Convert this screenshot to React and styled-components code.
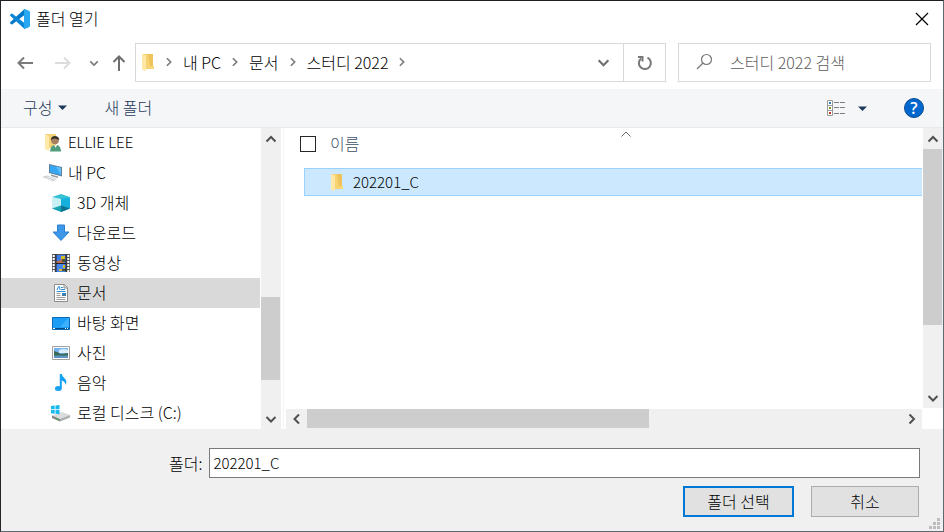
import React, { useState } from 'react';
import styled, { createGlobalStyle, css } from 'styled-components';

const GlobalStyle = createGlobalStyle`
  *, *::before, *::after {
    box-sizing: border-box;
  }

  body {
    margin: 0;
    background: #fff;
    color: #000;
    font: 300 16px/20px 'Noto Sans CJK KR', sans-serif;
  }

  button, input {
    margin: 0;
    color: inherit;
    font: inherit;
  }

  svg {
    display: block;
    flex: none;
  }
`;

const latin = css`
  font-size: 15px;
`;

const Dialog = styled.main`
  display: flex;
  flex-direction: column;
  min-height: 100vh;
  background: #fff;
  border: 1px solid #5f686c;
  border-top-color: #1f2026;
  border-left-color: #26262a;
`;

const TitleBar = styled.header`
  display: flex;
  align-items: center;
  height: 36px;
  padding: 0 11px 0 8px;
`;

const Title = styled.h1`
  flex: 1;
  margin: 0;
  padding: 0 0 2px 5px;
  font-size: 16px;
  font-weight: 300;
`;

const IconButton = styled.button`
  display: flex;
  align-items: center;
  justify-content: center;
  width: ${(p) => p.$width || 20}px;
  height: 36px;
  padding: 0;
  border: 0;
  background: none;
`;

const NavBar = styled.div`
  display: flex;
  align-items: center;
  gap: 12px;
  padding: 6px 12px 7px 14px;
`;

const NavButtons = styled.div`
  display: flex;
  align-items: center;
  gap: 14px;
  width: 108px;
`;

const HistoryButtons = styled.div`
  display: flex;
  align-items: center;
`;

const AddressBar = styled.div`
  display: flex;
  flex: 1;
  height: 39px;
  border: 1px solid #d9d9d9;
`;

const Crumbs = styled.nav`
  display: flex;
  flex: 1;
  align-items: center;
  padding: 0 0 2px 5px;
`;

const Crumb = styled.button`
  padding: 0;
  border: 0;
  background: none;
`;

const CrumbArrow = styled.span`
  display: flex;
  justify-content: center;
  width: 28px;
`;

const RefreshButton = styled(IconButton)`
  width: 42px;
  height: auto;
  border-left: 1px solid #d9d9d9;
`;

const SearchBox = styled.label`
  display: flex;
  align-items: center;
  gap: 17px;
  width: 253px;
  height: 39px;
  padding: 0 0 2px 17px;
  border: 1px solid #d9d9d9;
`;

const SearchInput = styled.input`
  flex: 1;
  min-width: 0;
  padding: 0;
  border: 0;
  outline: 0;
  background: none;

  &::placeholder {
    color: #5d5d5d;
    opacity: 1;
  }
`;

const Toolbar = styled.div`
  display: flex;
  align-items: center;
  height: 39px;
  padding: 0 19px 0 22px;
  background: #f5f6f7;
  border-bottom: 1px solid #e8e9eb;
`;

const ToolButton = styled.button`
  display: flex;
  align-items: center;
  gap: 6px;
  margin-right: 37px;
  padding: 0 0 2px;
  border: 0;
  background: none;
  color: #1e395b;
`;

const ToolbarEnd = styled.div`
  display: flex;
  align-items: center;
  gap: 12px;
  margin-left: auto;
`;

const HelpButton = styled.button`
  width: 20px;
  height: 20px;
  margin-left: 25px;
  padding: 0;
  border: 1px solid #0b4a8c;
  border-radius: 50%;
  background: #0067cf;
  color: #fff;
  font: 600 16px/18px 'Open Sans', sans-serif;
`;

const Panes = styled.div`
  display: flex;
  flex: 1;
`;

const Tree = styled.ul`
  width: 260px;
  margin: 0;
  padding: 0 1px 1px 0;
  list-style: none;
`;

const TreeItem = styled.li`
  display: flex;
  align-items: center;
  gap: 6px;
  height: 30px;
  padding-left: ${(p) => (p.$depth ? 50 : 41)}px;
  background: ${(p) => (p.$selected ? '#d9d9d9' : 'transparent')};
  ${(p) => p.$latin && latin}
`;

const TreeLabel = styled.span`
  padding-bottom: 2px;
`;

const ScrollBar = styled.div`
  display: flex;
  flex-direction: ${(p) => (p.$horizontal ? 'row' : 'column')};
  ${(p) => (p.$horizontal ? 'height: 20px;' : 'width: 20px;')}
  background: #f0f0f0;
`;

const ScrollArrow = styled.button`
  display: flex;
  align-items: center;
  justify-content: center;
  width: ${(p) => (p.$horizontal ? 21 : 19)}px;
  height: ${(p) => (p.$horizontal ? 19 : 21)}px;
  padding: 0;
  border: 0;
  background: none;
`;

const Track = styled.div`
  display: flex;
  flex: 1;
  flex-direction: ${(p) => (p.$horizontal ? 'row' : 'column')};
`;

const Spacer = styled.div`
  flex: ${(p) => p.$grow};
`;

const Thumb = styled.div`
  flex: ${(p) => p.$grow};
  background: #cdcdcd;
  ${(p) => (p.$horizontal ? 'height: 19px;' : 'width: 19px;')}
`;

const Splitter = styled.div`
  width: 3px;
  border-right: 1px solid #f4f4f4;
`;

const FilePane = styled.section`
  display: grid;
  flex: 1;
  grid-template-columns: 1fr 20px;
  grid-template-rows: 1fr 20px;
  gap: 1px;
  padding-left: 2px;
`;

const FileTable = styled.div`
  padding-left: 14px;
`;

const ColumnHeader = styled.div`
  display: grid;
  grid-template-columns: 16px 1fr;
  align-items: center;
  column-gap: 14px;
  height: 32px;
  margin-bottom: 8px;
  color: #3a5068;
`;

const NameHeader = styled.div`
  display: grid;
  grid-template-columns: 1fr 1fr 1fr;
  align-items: center;
  height: 100%;
  padding-bottom: 2px;

  svg {
    align-self: start;
    justify-self: center;
  }
`;

const CheckBox = styled.input`
  width: 16px;
  height: 16px;
  appearance: none;
  border: 1px solid #262626;
  background: #fff;
`;

const FileRow = styled.div`
  ${latin}
  display: flex;
  align-items: center;
  gap: 9px;
  height: 28px;
  margin-left: 4px;
  padding-left: 25px;
  border: 1px solid #99d1ff;
  border-right: 0;
  background: #cce8ff;
`;

const Footer = styled.footer`
  position: relative;
  padding: 19px 23px 14px;
  background: #f0f0f0;
`;

const FolderField = styled.div`
  display: flex;
  align-items: center;
  gap: 7px;
  padding-left: 145px;
`;

const FolderInput = styled.input`
  ${latin}
  flex: 1;
  height: 30px;
  padding: 0 3px 2px;
  border: 1px solid #7a7a7a;
  outline: 0;
  background: #fff;
`;

const Actions = styled.div`
  display: flex;
  justify-content: flex-end;
  gap: 17px;
  padding: 8px 1px 0 0;
`;

const ActionButton = styled.button`
  width: ${(p) => (p.$primary ? 111 : 108)}px;
  height: 31px;
  padding: 0 0 2px;
  border: ${(p) => (p.$primary ? '2px solid #0078d7' : '1px solid #adadad')};
  background: #e1e1e1;
`;

const Grip = styled.svg`
  position: absolute;
  right: 3px;
  bottom: 2px;
`;

const chevrons = {
  up: 'M1.500 8.500 L6 4 L10.500 8.500',
  down: 'M1.500 4 L6 8.500 L10.500 4',
  left: 'M8 1.500 L3.500 6 L8 10.500',
  right: 'M3.500 1.500 L8 6 L3.500 10.500',
};

const Chevron = ({ dir, size = 12, color = '#505050', weight = 2 }) => (
  <svg width={size} height={size} viewBox="0 0 12 12" fill="none" stroke={color} strokeWidth={weight} aria-hidden="true">
    <path d={chevrons[dir]} />
  </svg>
);

const Arrow = ({ color, rotate = 0 }) => (
  <svg width="18" height="18" viewBox="0 0 18 18" fill="none" stroke={color} strokeWidth="2" aria-hidden="true">
    <path d="M17 9H2.5M8 3.5 2.5 9 8 14.5" transform={`rotate(${rotate} 9 9)`} />
  </svg>
);

const Caret = () => (
  <svg width="9" height="5" viewBox="0 0 9 5" aria-hidden="true">
    <path d="M0 0.5h9L4.5 5z" fill="#1e395b" />
  </svg>
);

const VsCodeLogo = () => (
  <svg width="22" height="22" viewBox="0 0 22 22" aria-hidden="true">
    <path d="M1.2 14.200 15.500 1v6L3.400 16.200q-.6.400-1.200 0l-1-.9q-.5-.5 0-1.100z" fill="#0078c8" />
    <path d="M1.2 7.800 15.500 21v-6L3.400 5.800q-.6-.4-1.200 0l-1 .9q-.5.500 0 1.100z" fill="#0a86d6" />
    <path d="M15 .8 20 2.800Q21 3.200 21 4.200v13.600q0 1-1 1.400L15 21.200V15.500 6.500z" fill="#29a7f0" />
  </svg>
);

const FolderIcon = () => (
  <svg width="14" height="18" viewBox="0 0 14 18" aria-hidden="true">
    <path d="M2 1h10v12l1 1v2H2z" fill="#f6d273" />
    <path d="M7 1h5v12h-3z" fill="#eec35c" />
    <path d="M1 1l4 1.5v14L4 18l-3-1.5z" fill="#ffe8a6" />
    <path d="M10 13h3v3h-3z" fill="#f9d976" />
  </svg>
);

const treeIcons = {
  user: (
    <>
      <path d="M3 1h11v14H3z" fill="#f3d27a" />
      <path d="M3 1l4 2v15l-4-2z" fill="#ffe9a8" />
      <circle cx="13" cy="7.500" r="3.800" fill="#a9805f" />
      <path d="M9 7.500Q8.500 3.500 12.500 3q4.500 0 4.800 4-2-1-3.800-1.500L10.300 6z" fill="#33302d" />
      <path d="M8 18.500q.5-5.500 4-6.500l1.500 1 2-1q3.500 1.500 3.500 6.500z" fill="#4f9d7d" />
      <path d="M12 12l1.500 3 1.700-3z" fill="#e8e8e8" />
    </>
  ),
  pc: (
    <>
      <path d="M7 1l13 3v9.500L7 10z" fill="#5c7f99" />
      <path d="M8 2.300l11 2.500v7.400L8 9.200z" fill="#35a7f5" />
      <path d="M14 3.600l5 1.200v7.400z" fill="#62c0ff" />
      <path d="M9 11.500l7 2v1.500l-7-2z" fill="#8f999f" />
      <path d="M0 14l5-1.500 10 3.500-4 2.500z" fill="#c5cacd" />
      <path d="M2 14.500l9 3M5 13.500l8.500 3" stroke="#fff" strokeWidth=".7" />
    </>
  ),
  cube: (
    <>
      <path d="M1 4l9-3 9 3-9 3z" fill="#35c2d4" />
      <path d="M1 4l9 2v12.500L1 15.500z" fill="#c9f1f5" />
      <path d="M19 4l-9 2v12.500l9-3z" fill="#16b0dd" />
      <path d="M1 15.500L10 12.500l9 3-9 3.500z" fill="#17a2b5" />
      <path d="M10 12.500v6.500l9-3.500z" fill="#0b7694" />
    </>
  ),
  download: <path d="M6.500 2h7v7h4.500L10 17.500 2 9h4.500z" fill="#3d97e8" stroke="#2a7fd0" />,
  video: (
    <>
      <path d="M1 1h18v18H1z" fill="#55565c" />
      <path d="M5 2h10v8H5z" fill="#3d7be8" />
      <path d="M5 11h10v8H5z" fill="#4686ee" />
      <path d="M5 8h3l2-2 3 2v2H5z" fill="#b9705a" />
      <path d="M10 3h4v3h-4zM12 12h2v3h-2zM8 16h3v2H8z" fill="#d9bc27" />
      <path d="M11 6h3v3h-3zM11 16h4v2h-4z" fill="#51582b" />
      <path d="M2.700 2v17M17.300 2v17" stroke="#fff" strokeWidth="2" strokeDasharray="2 1" />
      <path d="M5 1v18M15 1v18M5 10.500h10" stroke="#222" />
    </>
  ),
  document: (
    <>
      <path d="M3.500 1.500h10l3 3v14h-13z" fill="#fff" stroke="#8c8c8c" />
      <path d="M13 1.500v3.500h3.500" fill="#e4e4e4" stroke="#8c8c8c" />
      <path d="M6 7l1.500-3.500h1L9 7M10 4.500h2M10 6.500h4M5.500 8.500h9" fill="none" stroke="#2b8fe0" />
      <path d="M5.500 10.500h4M5.500 12.500h4M5.500 14.500h9M5.500 16.500h9" stroke="#9a9a9a" />
      <path d="M11 10h4v3h-4z" fill="#3a7fae" />
    </>
  ),
  desktop: (
    <>
      <path d="M1.500 4.500h17v12h-17z" fill="#1b9cf5" stroke="#0869b8" />
      <path d="M9 14l8-9h1v9z" fill="#3cb0ff" />
      <path d="M2 15.500h16" stroke="#064c86" />
      <path d="M2 15.500h2M14 15.500h1M16 15.500h1" stroke="#fff" />
    </>
  ),
  picture: (
    <>
      <path d="M1.500 3.500h17v13h-17z" fill="#fff" stroke="#a0a0a0" />
      <path d="M3 5h14v10H3z" fill="#75b4ee" />
      <path d="M8 7q5-2 9 0v3H8z" fill="#d7ebfa" />
      <path d="M3 8q4 1 7 3l7-1v3H3z" fill="#3a6b55" />
      <path d="M3 12.500h14V15H3z" fill="#5c94c4" />
    </>
  ),
  music: (
    <>
      <ellipse cx="7.300" cy="15.500" rx="3.400" ry="2.500" fill="#18a0f2" />
      <path d="M8.800 1h2q.3 2.500 2.700 4.300 3.200 2.700 1 6.700-.2-3.500-3.700-4.500V15.500h-2z" fill="#18a0f2" />
    </>
  ),
  disk: (
    <>
      <path d="M1 12.500L11 9l8 3-10 4z" fill="#d9dbdc" />
      <path d="M1 12.500L9 16v2.500L1 15z" fill="#7f8486" />
      <path d="M9 16l10-4v2.500l-10 4z" fill="#a9adaf" />
      <path d="M5 15l3 1.200v1L5 16z" fill="#39b54a" />
      <path d="M0 3l3.700-.5v3.700H0zM4.500 2.400L8.500 2v4.200h-4zM0 7h3.700v3.700L0 10.200zM4.500 7h4v4.300l-4-.5z" fill="#19b9f0" />
    </>
  ),
};

const TreeIcon = ({ name }) => (
  <svg width="20" height="20" viewBox="0 0 20 20" aria-hidden="true">
    {treeIcons[name]}
  </svg>
);

const places = [
  { icon: 'user', name: 'ELLIE LEE', depth: 0, latin: true },
  { icon: 'pc', name: '내 PC', depth: 0 },
  { icon: 'cube', name: '3D 개체', depth: 1 },
  { icon: 'download', name: '다운로드', depth: 1 },
  { icon: 'video', name: '동영상', depth: 1 },
  { icon: 'document', name: '문서', depth: 1, selected: true },
  { icon: 'desktop', name: '바탕 화면', depth: 1 },
  { icon: 'picture', name: '사진', depth: 1 },
  { icon: 'music', name: '음악', depth: 1 },
  { icon: 'disk', name: '로컬 디스크 (C:)', depth: 1 },
];

const crumbs = ['내 PC', '문서', '스터디 2022'];

// before / thumb / after are the shares of the track
const Scroll = ({ horizontal, before, thumb, after }) => (
  <ScrollBar $horizontal={horizontal}>
    <ScrollArrow $horizontal={horizontal} aria-label={horizontal ? '왼쪽' : '위'}>
      <Chevron dir={horizontal ? 'left' : 'up'} />
    </ScrollArrow>
    <Track $horizontal={horizontal}>
      <Spacer $grow={before} />
      <Thumb $horizontal={horizontal} $grow={thumb} />
      <Spacer $grow={after} />
    </Track>
    <ScrollArrow $horizontal={horizontal} aria-label={horizontal ? '오른쪽' : '아래'}>
      <Chevron dir={horizontal ? 'right' : 'down'} />
    </ScrollArrow>
  </ScrollBar>
);

export default function App() {
  const [folder, setFolder] = useState('202201_C');

  return (
    <>
      <GlobalStyle />
      <Dialog>
        <TitleBar>
          <VsCodeLogo />
          <Title>폴더 열기</Title>
          <IconButton aria-label="닫기">
            <svg width="14" height="14" viewBox="0 0 14 14" stroke="#000" strokeWidth="1.200">
              <path d="M1 1l12 12M13 1L1 13" />
            </svg>
          </IconButton>
        </TitleBar>

        <NavBar>
          <NavButtons>
            <HistoryButtons>
              <IconButton aria-label="뒤로"><Arrow color="#7b7b7b" /></IconButton>
              <IconButton $width={56} aria-label="앞으로"><Arrow color="#dcdcdc" rotate={180} /></IconButton>
              <IconButton $width={6} aria-label="최근 위치">
                <Chevron dir="down" size={10} color="#7b7b7b" />
              </IconButton>
            </HistoryButtons>
            <IconButton $width={16} aria-label="위로"><Arrow color="#6e6e6e" rotate={90} /></IconButton>
          </NavButtons>
          <AddressBar>
            <Crumbs>
              <FolderIcon />
              <CrumbArrow><Chevron dir="right" size={10} color="#7b7b7b" /></CrumbArrow>
              {crumbs.map((c) => (
                <React.Fragment key={c}>
                  <Crumb>{c}</Crumb>
                  <CrumbArrow><Chevron dir="right" size={10} color="#7b7b7b" /></CrumbArrow>
                </React.Fragment>
              ))}
            </Crumbs>
            <IconButton $width={40} aria-label="이전 위치">
              <Chevron dir="down" size={13} color="#707070" />
            </IconButton>
            <RefreshButton aria-label="새로 고침">
              <svg width="16" height="16" viewBox="0 0 16 16" fill="none" stroke="#777" strokeWidth="2">
                <path d="M10.500 2.700A6 6 0 1 1 4 3.500" />
                <path d="M1 2h4.500v4.500" />
              </svg>
            </RefreshButton>
          </AddressBar>
          <SearchBox>
            <svg width="17" height="17" viewBox="0 0 17 17" fill="none" stroke="#777" strokeWidth="1.200">
              <circle cx="10.500" cy="6.500" r="5" />
              <path d="M7 10L1 16" />
            </svg>
            <SearchInput aria-label="검색" placeholder="스터디 2022 검색" />
          </SearchBox>
        </NavBar>

        <Toolbar>
          <ToolButton>구성 <Caret /></ToolButton>
          <ToolButton>새 폴더</ToolButton>
          <ToolbarEnd>
            <IconButton aria-label="보기">
              <svg width="20" height="16" viewBox="0 0 20 16" fill="none">
                <path d="M1.500.5h5v15h-5zM1.500 5.500h5M1.500 10.500h5" fill="#fff" stroke="#9a9a9a" />
                <path d="M3 2h2v2H3z" fill="#2f7fb5" />
                <path d="M3 7h2v2H3z" fill="#7c9a2c" />
                <path d="M3 12h2v2H3z" fill="#c0361c" />
                <path d="M8 2.500h5M14 2.500h5M8 7.500h5M14 7.500h5M8 13.500h5M14 13.500h5" stroke="#7a7f85" />
              </svg>
            </IconButton>
            <IconButton $width={9} aria-label="보기 옵션"><Caret /></IconButton>
            <HelpButton aria-label="도움말">?</HelpButton>
          </ToolbarEnd>
        </Toolbar>

        <Panes>
          <Tree>
            {places.map((p) => (
              <TreeItem key={p.name} $depth={p.depth} $selected={p.selected} $latin={p.latin}>
                <TreeIcon name={p.icon} />
                <TreeLabel>{p.name}</TreeLabel>
              </TreeItem>
            ))}
          </Tree>
          <Scroll before={148} thumb={83} after={28} />
          <Splitter />
          <FilePane>
            <FileTable>
              <ColumnHeader>
                <CheckBox type="checkbox" aria-label="모두 선택" />
                <NameHeader>
                  이름
                  <Chevron dir="up" color="#666" weight={1} />
                </NameHeader>
              </ColumnHeader>
              <FileRow>
                <FolderIcon />
                202201_C
              </FileRow>
            </FileTable>
            <Scroll before={0} thumb={176} after={62} />
            <Scroll horizontal before={0} thumb={342} after={252} />
          </FilePane>
        </Panes>

        <Footer>
          <FolderField>
            <label htmlFor="folder">폴더:</label>
            <FolderInput id="folder" value={folder} onChange={(e) => setFolder(e.target.value)} />
          </FolderField>
          <Actions>
            <ActionButton $primary>폴더 선택</ActionButton>
            <ActionButton>취소</ActionButton>
          </Actions>
          <Grip width="11" height="11" viewBox="0 0 11 11" fill="#bdbdbd" aria-hidden="true">
            <path d="M8 0h3v3H8zM4 4h3v3H4zM8 4h3v3H8zM0 8h3v3H0zM4 8h3v3H4zM8 8h3v3H8z" />
          </Grip>
        </Footer>
      </Dialog>
    </>
  );
}
